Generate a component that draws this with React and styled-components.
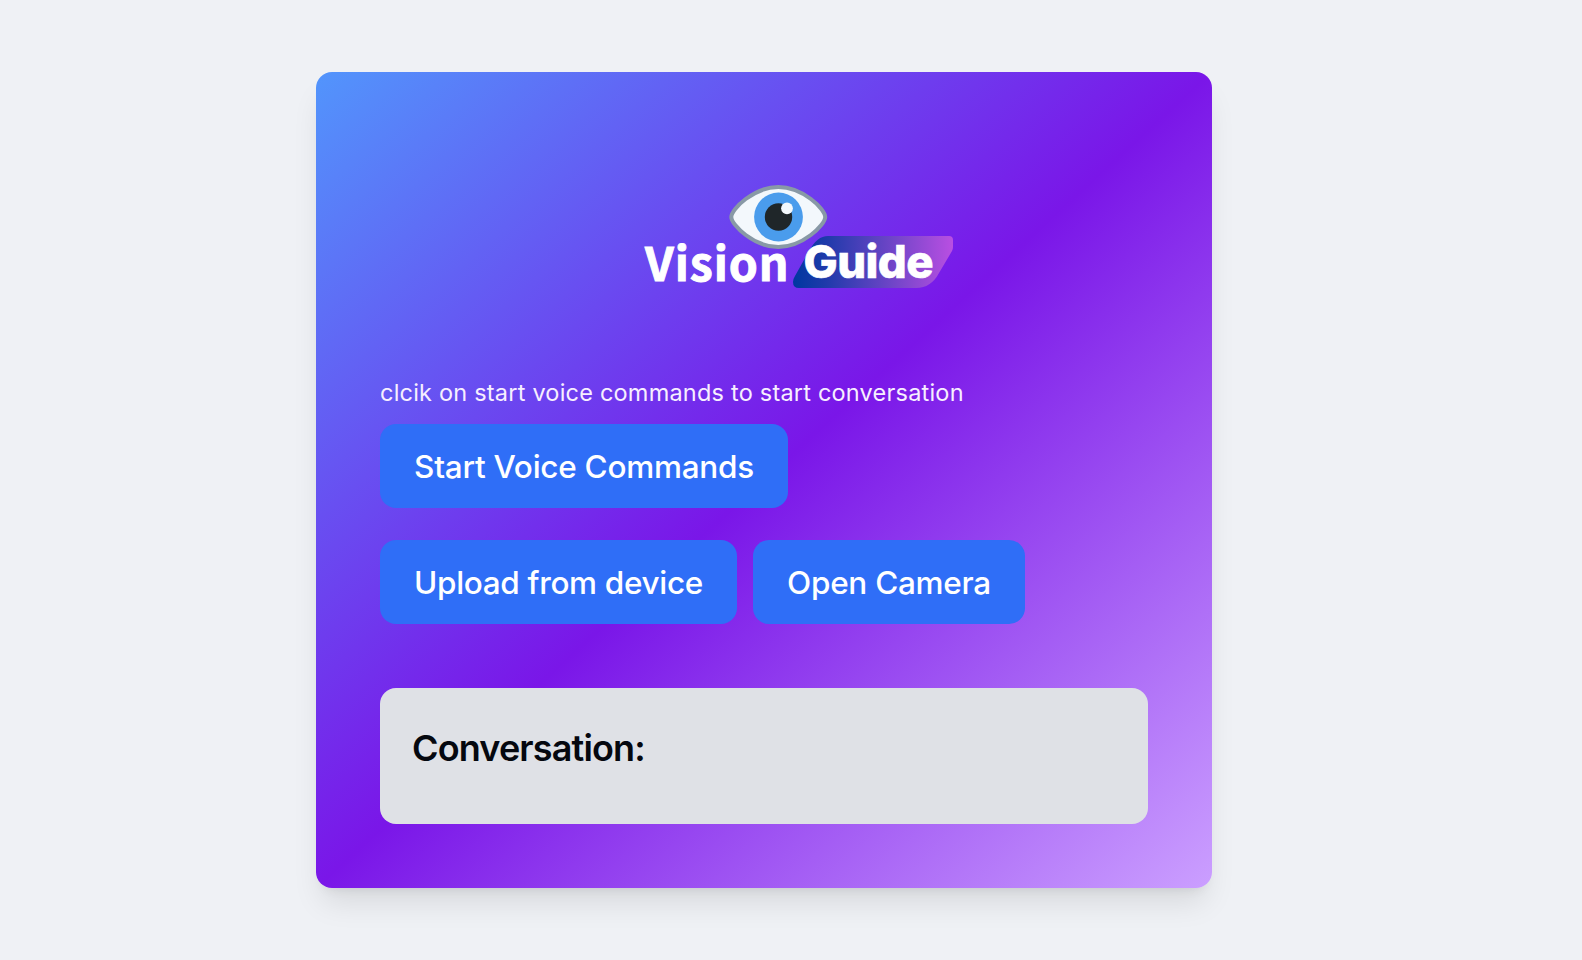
import React from "react";
import styled, { createGlobalStyle } from "styled-components";

const GlobalStyle = createGlobalStyle`
  *, *::before, *::after { box-sizing: border-box; }
  body {
    margin: 0;
    background: #eff1f5;
    font-family: Inter, "Liberation Sans", sans-serif;
  }
`;

const Page = styled.main`
  min-height: 960px;
  padding: 72px 370px 72px 316px;
`;

const Card = styled.section`
  display: flex;
  flex-direction: column;
  align-items: flex-start;
  width: 896px;
  height: 816px;
  padding: 64px;
  border-radius: 16px;
  background: linear-gradient(to bottom right, #5295fc, #7a16e8 50%, #cb9fff);
  box-shadow: 0 20px 30px -6px rgba(0, 0, 0, 0.1), 0 8px 12px -8px rgba(0, 0, 0, 0.1);
`;

const Logo = styled.svg`
  display: block;
  flex: none;
  width: 340px;
  height: 130px;
  margin: 34px 0 0 250px;
`;

const Hint = styled.p`
  margin: 75px 0 0;
  height: 49px;
  color: #f7efff;
  font-size: 23.5px;
  line-height: 36px;
  letter-spacing: 0.21px;
  white-space: nowrap;
`;

const Actions = styled.div`
  display: flex;
  gap: 16px;
  margin-bottom: 32px;
`;

const Button = styled.button`
  width: ${(p) => p.$width}px;
  height: 84px;
  padding: 2px 0 0;
  border: 0;
  border-radius: 16px;
  background: #2f6ef7;
  color: #fff;
  font: 500 31.5px/48px Inter, "Liberation Sans", sans-serif;
  letter-spacing: ${(p) => p.$tracking}px;
  white-space: nowrap;
`;

const Conversation = styled.section`
  width: 768px;
  height: 136px;
  margin-top: 32px;
  padding: 32px;
  border-radius: 16px;
  background: #dfe1e6;
`;

const Title = styled.h2`
  margin: 0;
  color: #05080f;
  font-size: 36px;
  font-weight: 600;
  line-height: 57px;
  letter-spacing: -0.85px;
`;

function VisionGuideLogo() {
  return (
    <Logo viewBox="0 0 340 130" role="img" aria-label="Vision Guide">
      <defs>
        <linearGradient id="plate" x1="0" x2="1" y1="0" y2="0">
          <stop offset="0" stopColor="#0037a0" />
          <stop offset="0.2" stopColor="#1e3aaa" />
          <stop offset="1" stopColor="#b94fe2" />
        </linearGradient>
      </defs>
      <path
        d="M198 66H319Q323 66 323 70V77Q323 79 322 81L309 103Q301 118 286 118H169Q163 118 163 112Q163 109 165 106L179 81Q187 66 198 66Z"
        fill="url(#plate)"
      />
      <path
        d="M101.3 47C101.3 39 124 17 148.3 17S195.2 39 195.2 47S172.5 77 148.3 77S101.3 55 101.3 47Z"
        fill="#f3f8fc"
        stroke="#8899a6"
        strokeWidth="4"
      />
      <circle cx="148.5" cy="47" r="24.4" fill="#4a9cec" />
      <circle cx="148.5" cy="47" r="13.7" fill="#1f2629" />
      <circle cx="157" cy="38.3" r="5.9" fill="#f3f8fc" />
      <text
        x="15"
        y="111"
        fill="#fff"
        stroke="#fff"
        strokeWidth="0.9"
        fontFamily="Noto Sans CJK SC, sans-serif"
        fontSize="46.5"
        fontWeight="700"
        textLength="143.5"
      >
        Vision
      </text>
      <text
        x="173.5"
        y="108"
        fill="#fff"
        stroke="#fff"
        strokeWidth="0.6"
        fontFamily="Inter, sans-serif"
        fontSize="45.5"
        fontWeight="800"
        textLength="130"
        lengthAdjust="spacing"
      >
        Guide
      </text>
    </Logo>
  );
}

export default function App() {
  return (
    <>
      <GlobalStyle />
      <Page>
        <Card>
          <VisionGuideLogo />
          <Hint>clcik on start voice commands to start conversation</Hint>
          <Actions>
            <Button $width={408} $tracking={-0.26}>Start Voice Commands</Button>
          </Actions>
          <Actions>
            <Button $width={357} $tracking={-0.33}>Upload from device</Button>
            <Button $width={272} $tracking={-0.27}>Open Camera</Button>
          </Actions>
          <Conversation>
            <Title>Conversation:</Title>
          </Conversation>
        </Card>
      </Page>
    </>
  );
}
